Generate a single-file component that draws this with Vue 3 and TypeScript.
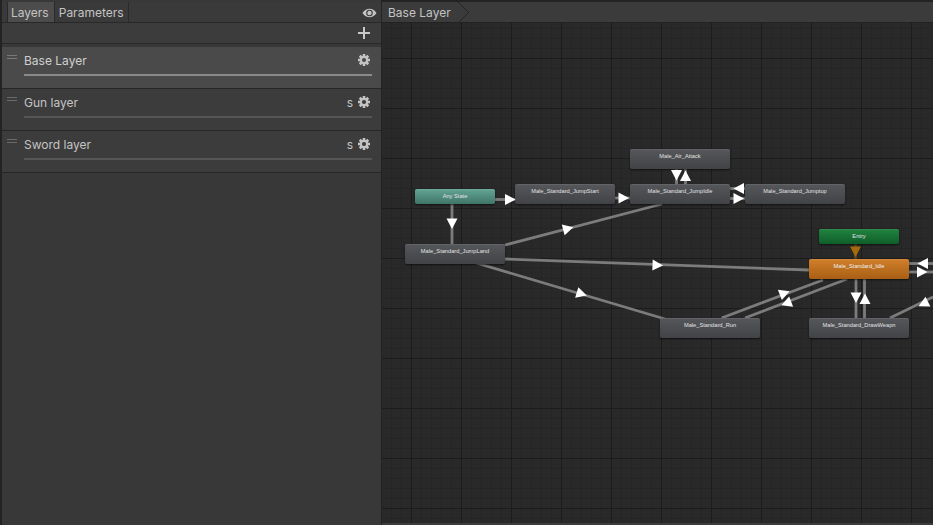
<script setup lang="ts">
type Tone = 'plain' | 'any' | 'entry' | 'active'

interface StateNode {
  name: string
  x: number
  y: number
  w: number
  h: number
  tone: Tone
}

interface Arrow {
  x: number
  y: number
  deg: number
  color?: string
}

const layers = [
  { name: 'Base Layer', selected: true, solo: false },
  { name: 'Gun layer', selected: false, solo: true },
  { name: 'Sword layer', selected: false, solo: true },
]

// coordinates are page pixels, the svg viewBox lines up with them
const nodes: StateNode[] = [
  { name: 'Any State', x: 415, y: 189, w: 80, h: 15, tone: 'any' },
  { name: 'Male_Standard_JumpStart', x: 515, y: 184, w: 100, h: 20, tone: 'plain' },
  { name: 'Male_Standard_JumpIdle', x: 630, y: 184, w: 100, h: 20, tone: 'plain' },
  { name: 'Male_Air_Attack', x: 630, y: 149, w: 100, h: 20, tone: 'plain' },
  { name: 'Male_Standard_Jumptop', x: 745, y: 184, w: 100, h: 20, tone: 'plain' },
  { name: 'Male_Standard_JumpLand', x: 405, y: 244, w: 100, h: 20, tone: 'plain' },
  { name: 'Entry', x: 819, y: 229, w: 80, h: 15, tone: 'entry' },
  { name: 'Male_Standard_Idle', x: 809, y: 259, w: 100, h: 20, tone: 'active' },
  { name: 'Male_Standard_Run', x: 660, y: 318, w: 100, h: 20, tone: 'plain' },
  { name: 'Male_Standard_DrawWeapn', x: 809, y: 318, w: 100, h: 20, tone: 'plain' },
]

const lines = [
  [495, 199.5, 515, 199.5],
  [615, 198, 630, 198],
  [452, 204, 452, 244],
  [505, 245, 662, 204],
  [505, 259, 809, 270],
  [473, 262, 665, 319],
  [676.5, 169, 676.5, 184],
  [685.5, 169, 685.5, 184],
  [730, 188.5, 745, 188.5],
  [730, 198.5, 745, 198.5],
  [909, 263.5, 933, 263.5],
  [909, 272, 933, 272],
  [721.6, 318, 823, 280],
  [745, 318, 847, 279],
  [856, 279, 856, 318],
  [864.5, 279, 864.5, 318],
  [890, 318, 933, 297],
]

const arrows: Arrow[] = [
  { x: 510.5, y: 199.5, deg: 0 },
  { x: 624, y: 198, deg: 0 },
  { x: 452, y: 224, deg: 90 },
  { x: 568.5, y: 228.5, deg: -15 },
  { x: 658, y: 265.3, deg: 2 },
  { x: 582, y: 294, deg: 17 },
  { x: 676.5, y: 175.5, deg: 90 },
  { x: 685.5, y: 175.5, deg: -90 },
  { x: 738.5, y: 188.5, deg: 180 },
  { x: 739, y: 198.5, deg: 0 },
  { x: 922.5, y: 263.5, deg: 180 },
  { x: 922.5, y: 272, deg: 0 },
  { x: 785, y: 293, deg: -21 },
  { x: 786, y: 303.5, deg: 159 },
  { x: 856, y: 298, deg: 90 },
  { x: 865, y: 298.5, deg: -90 },
  { x: 923, y: 304, deg: 154 },
  { x: 855.5, y: 252, deg: 90, color: '#a56a0b' },
]

const arrowPoints = '-5.5,-5.5 5,0 -5.5,5.5'

const gearTeeth = [0, 45, 90, 135]

const nodeStyle = (n: StateNode) => ({
  left: `${n.x - 382}px`,
  top: `${n.y - 23}px`,
  width: `${n.w}px`,
  height: `${n.h}px`,
})
</script>

<template>
  <div class="window">
    <aside class="side">
      <div class="tabs">
        <span class="tab on">Layers</span>
        <span class="tab">Parameters</span>
        <svg class="eye" width="15" height="10" viewBox="0 0 15 10">
          <path d="M.5 5C2.500 2 4.800.8 7.500.8S12.500 2 14.500 5c-2 3-4.300 4.200-7 4.200S2.500 8 .5 5z" fill="#c4c4c4" />
          <circle cx="7.500" cy="5" r="3.300" fill="#3a3a3a" />
          <circle cx="7.500" cy="5" r="2.200" fill="#c4c4c4" />
        </svg>
      </div>
      <div class="tools">
        <svg width="12" height="12" viewBox="0 0 12 12">
          <path d="M5 0h2v5h5v2H7v5H5V7H0V5h5z" fill="#c8c8c8" />
        </svg>
      </div>
      <div class="list">
        <div v-for="l in layers" :key="l.name" class="layer" :class="{ selected: l.selected }">
          <div class="grip"></div>
          <div class="body">
            <div class="head">
              <span class="name">{{ l.name }}</span>
              <span v-if="l.solo" class="solo">s</span>
              <svg class="gear" width="12" height="12" viewBox="-6 -6 12 12">
                <rect
                  v-for="deg in gearTeeth"
                  :key="deg"
                  x="-1.300"
                  y="-6"
                  width="2.600"
                  height="12"
                  fill="#c4c4c4"
                  :transform="`rotate(${deg})`"
                />
                <circle r="4.200" fill="#c4c4c4" />
                <circle r="2.100" :fill="l.selected ? '#4a4a4a' : '#3c3c3c'" />
              </svg>
            </div>
            <div class="weight"></div>
          </div>
        </div>
      </div>
    </aside>

    <main class="main">
      <div class="crumbs">
        <span class="crumb">Base Layer</span>
        <svg class="chev" width="12" height="21" viewBox="0 0 12 21">
          <path d="M0 0l10.500 10.500L0 21" fill="none" stroke="#252525" />
        </svg>
      </div>
      <div class="graph">
        <svg class="wires" width="551" height="500" viewBox="382 23 551 500">
          <line
            v-for="(l, i) in lines"
            :key="i"
            :x1="l[0]"
            :y1="l[1]"
            :x2="l[2]"
            :y2="l[3]"
            stroke="#7c7c7c"
            stroke-width="2.800"
          />
          <line x1="855.500" y1="244" x2="855.500" y2="259" stroke="#5a4318" stroke-width="2.800" />
        </svg>
        <div v-for="n in nodes" :key="n.name" class="node" :class="n.tone" :style="nodeStyle(n)">
          {{ n.name }}
        </div>
        <svg class="wires" width="551" height="500" viewBox="382 23 551 500">
          <polygon
            v-for="(a, i) in arrows"
            :key="i"
            :points="arrowPoints"
            :fill="a.color || '#fff'"
            :transform="`translate(${a.x} ${a.y}) rotate(${a.deg})`"
          />
        </svg>
      </div>
      <div class="foot"></div>
    </main>
  </div>
</template>

<style>
html,
body {
  margin: 0;
  background: #232323;
}
</style>

<style scoped>
.window {
  display: flex;
  width: 933px;
  height: 525px;
  overflow: hidden;
  font-family: Inter, "Liberation Sans", sans-serif;
  font-size: 12px;
  color: #c4c4c4;
  background: #232323;
}

.side {
  display: flex;
  flex-direction: column;
  width: 379px;
  margin-left: 2px;
  margin-right: 1px;
  padding-top: 2px;
  background: #383838;
}

.tabs {
  display: flex;
  align-items: stretch;
  height: 20px;
  padding-left: 5px;
  background: #3a3a3a;
  border-bottom: 1px solid #282828;
}

.tab {
  display: flex;
  align-items: center;
  padding: 1px 4px 0;
  border-right: 1px solid #2a2a2a;
}

.tab.on {
  padding: 1px 5px 0 3px;
  background: #4c4c4c;
  border-left: 1px solid #2a2a2a;
}

.eye {
  margin: 6px 4px 0 auto;
}

.tools {
  display: flex;
  align-items: center;
  justify-content: flex-end;
  height: 20px;
  padding-right: 11px;
  background: #3c3c3c;
  border-bottom: 1px solid #282828;
}

.list {
  padding-top: 3px;
}

.layer {
  display: flex;
  height: 41px;
  padding: 0 9px 0 5px;
  background: #3c3c3c;
  border-bottom: 1px solid #262626;
}

.layer.selected {
  background: #4a4a4a;
}

.grip {
  width: 10px;
  height: 1px;
  margin: 8px 7px 0 0;
  background: #6a6a6a;
  box-shadow: 0 3px 0 #6a6a6a;
}

.selected .grip {
  background: #7a7a7a;
  box-shadow: 0 3px 0 #7a7a7a;
}

.body {
  flex: 1;
  padding-top: 5px;
}

.head {
  display: flex;
  align-items: center;
  height: 16px;
}

.name {
  flex: 1;
}

.selected .name {
  color: #cfcfcf;
}

.solo {
  margin-right: 5px;
}

.gear {
  margin-right: 2px;
}

.weight {
  height: 2px;
  margin-top: 6px;
  background: #555;
}

.selected .weight {
  background: #8a8a8a;
}

.main {
  display: flex;
  flex: 1;
  flex-direction: column;
  padding-top: 2px;
}

.crumbs {
  display: flex;
  flex: none;
  height: 20px;
  background: #3b3b3b;
  border-bottom: 1px solid #222;
}

.crumb {
  padding: 1px 0 0 6px;
  line-height: 20px;
}

.chev {
  margin-left: 7px;
}

.graph {
  position: relative;
  flex: 1;
  overflow: hidden;
  background-color: #292929;
  background-image:
    linear-gradient(#1c1c1c 1px, transparent 1px),
    linear-gradient(90deg, #1c1c1c 1px, transparent 1px),
    linear-gradient(#252525 1px, transparent 1px),
    linear-gradient(90deg, #252525 1px, transparent 1px);
  background-size: 50px 50px, 50px 50px, 10px 10px, 10px 10px;
  background-position: 0 35px, 29px 0, 0 5px, 9px 0;
}

.wires {
  position: absolute;
  top: 0;
  left: 0;
}

.foot {
  flex: none;
  height: 2px;
  background: #3c3c3c;
}

.node {
  position: absolute;
  box-sizing: border-box;
  padding-top: 3px;
  border-radius: 2px;
  font-family: "Liberation Sans", sans-serif;
  font-size: 5.700px;
  line-height: 8px;
  text-align: center;
  white-space: nowrap;
  color: #e2e2e2;
  background: linear-gradient(#55575b, #424347);
  box-shadow: 0 1px 2px rgba(0, 0, 0, 0.6), inset 0 1px 0 rgba(255, 255, 255, 0.08);
}

.node.any {
  background: linear-gradient(#63a595, #3f7567);
}

.node.entry {
  background: linear-gradient(#20843f, #0f5e2a);
}

.node.active {
  background: linear-gradient(#d17f2b, #a85f14);
  color: #f0f0f0;
}
</style>
